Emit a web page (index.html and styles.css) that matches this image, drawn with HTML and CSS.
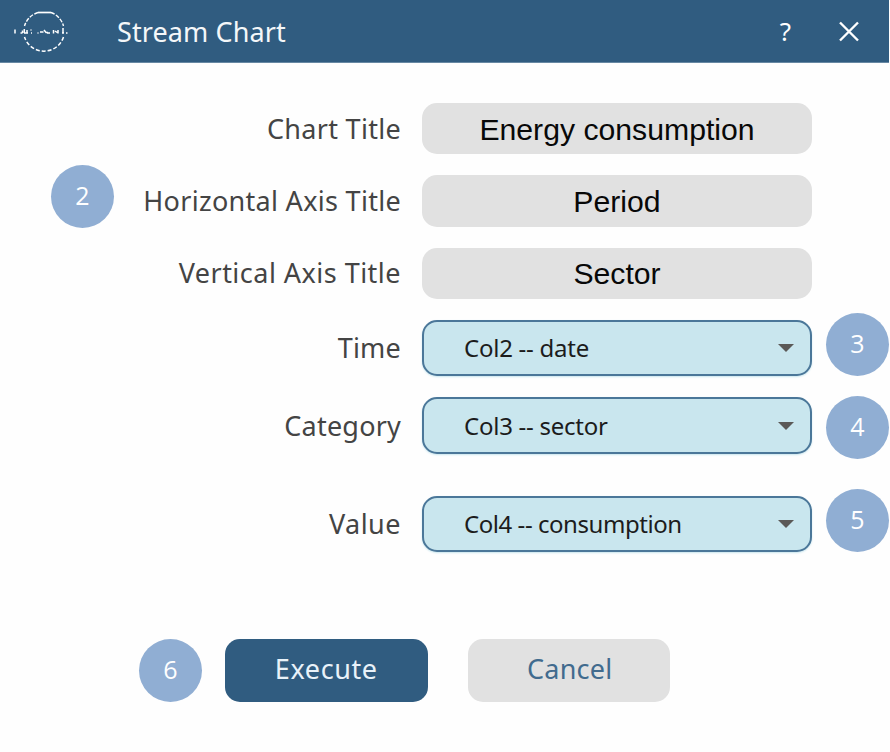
FILE: index.html
```html
<!DOCTYPE html>
<html lang="en">
<head>
    <meta charset="UTF-8">
    <meta name="viewport" content="width=device-width, initial-scale=1.0">
    <title>Stream Chart</title>
    <link rel="stylesheet" href="styles.css">
</head>
<body>
    <div class="dialog">
        <header class="titlebar">
            <svg class="logo" width="58" height="46" viewBox="0 0 58 46" fill="none" stroke="#fff">
                <path d="M25 3.5h13" stroke-width="1.7"/>
                <path d="M38 3.5A20 20 0 0 1 50.5 17M25 3.5A20 20 0 0 0 11.5 17" stroke-width="1.4" stroke-dasharray="4 1.5"/>
                <path d="M50.5 28A20.5 20.5 0 0 1 11.5 28" stroke-width="1.5" stroke-dasharray="4 2"/>
                <path d="M2 20.5v4M7.5 24h2M9.5 21.5v2.5M11 24h4M11.3 20v4M14 21v3M18 20.5v1M18 24h1M24.5 24h1M27 23h3.5M31 21l2 2.5h2M34 24h3M40.5 21v3.5M42 22l3 2M45 21v3.5M50 19v5M49 24h2M53 24h1.5" stroke-width="1.5"/>
            </svg>
            <h1 class="title">Stream Chart</h1>
            <button type="button" class="icon-btn help-btn" aria-label="Help">?</button>
            <button type="button" class="icon-btn close-btn" aria-label="Close">
                <svg width="22" height="22" viewBox="0 0 22 22" fill="none" stroke="#fff" stroke-width="2.4">
                    <path d="M2 2.5l18 18M20 2.5l-18 18"/>
                </svg>
            </button>
        </header>

        <form class="form">
            <div class="form-row">
                <label class="label-chart" for="chartTitle">Chart Title</label>
                <input type="text" id="chartTitle" value="Energy consumption">
            </div>
            <div class="form-row">
                <span class="step step-2">2</span>
                <label class="label-horizontal" for="xTitle">Horizontal Axis Title</label>
                <input type="text" id="xTitle" value="Period">
            </div>
            <div class="form-row">
                <label class="label-vertical" for="yTitle">Vertical Axis Title</label>
                <input type="text" id="yTitle" value="Sector">
            </div>
            <div class="form-row">
                <label class="label-time">Time</label>
                <div class="select"><span class="value-time">Col2 -- date</span></div>
                <span class="step step-3">3</span>
            </div>
            <div class="form-row">
                <label class="label-category">Category</label>
                <div class="select"><span class="value-category">Col3 -- sector</span></div>
                <span class="step step-4">4</span>
            </div>
            <div class="form-row row-value">
                <label class="label-value">Value</label>
                <div class="select"><span class="value-value">Col4 -- consumption</span></div>
                <span class="step step-5">5</span>
            </div>

            <div class="actions">
                <span class="step step-6">6</span>
                <button type="button" class="btn execute-btn">Execute</button>
                <button type="button" class="btn cancel-btn">Cancel</button>
            </div>
        </form>
    </div>
</body>
</html>
```
FILE: styles.css
```css
* {
    margin: 0;
    padding: 0;
    box-sizing: border-box;
}

body {
    font-family: 'Noto Sans', 'Open Sans', sans-serif;
    background: #fefefe;
    overflow: hidden;
}

.dialog {
    width: 889px;
    height: 752px;
}

.titlebar {
    display: flex;
    align-items: center;
    height: 63px;
    padding: 0 29px 0 13px;
    background: #305c80;
    border-bottom: 1px solid #6788a3;
    color: #f4f7f9;
}

.logo {
    margin-top: 2px;
}

.title {
    flex: 1;
    margin-left: 46px;
    padding-top: 2px;
    font-size: 27px;
    font-weight: 400;
    line-height: 36px;
    letter-spacing: 0.1px;
}

.icon-btn {
    display: flex;
    border: none;
    background: none;
    color: #fff;
    font-family: inherit;
}

.help-btn {
    margin-right: 47px;
    font-size: 26px;
}

.form {
    padding-top: 40px;
}

.form-row {
    position: relative;
    display: grid;
    grid-template-columns: 401px 390px;
    column-gap: 21px;
    align-items: center;
    margin-bottom: 21px;
}

.row-value {
    margin-top: 42px;
}

label {
    color: #444;
    font-size: 27px;
    line-height: 36px;
    text-align: right;
    white-space: nowrap;
}

.label-chart,
.label-horizontal {
    letter-spacing: 0.3px;
}

.label-vertical,
.label-value {
    letter-spacing: 0.48px;
}

.label-time,
.label-category {
    letter-spacing: 0.2px;
}

input {
    width: 390px;
    height: 51.4px;
    padding-top: 2px;
    border: none;
    border-radius: 15px;
    background: #e1e1e1;
    color: #080808;
    font-family: 'Liberation Sans', Arial, sans-serif;
    font-size: 30.2px;
    text-align: center;
}

.select {
    display: flex;
    align-items: center;
    justify-content: space-between;
    height: 56.3px;
    padding: 0 16px 0 40px;
    border: 2px solid #4b7799;
    border-radius: 15px;
    background: #c9e6ee;
    box-shadow: 0 1px 2px #c9e6ee;
    color: #1c1c1c;
    font-size: 24px;
    letter-spacing: -0.25px;
    white-space: nowrap;
}

.select span {
    padding-bottom: 1px;
}

.value-value {
    letter-spacing: -0.45px;
}

.select::after {
    content: '';
    border: 8px solid transparent;
    border-top-color: #5b5957;
    border-bottom: none;
}

.step {
    position: absolute;
    width: 63px;
    height: 63px;
    border-radius: 50%;
    background: #90aed3;
    color: #fff;
    font-family: 'Open Sans', sans-serif;
    font-size: 25px;
    line-height: 61px;
    text-align: center;
}

.step-2 {
    left: 51px;
    top: -10px;
}

.step-3 {
    left: 826px;
    top: -7px;
}

.step-4 {
    left: 826px;
    top: -1px;
}

.step-5 {
    left: 826px;
    top: -7px;
}

.step-6 {
    left: 139px;
    top: 0;
}

.actions {
    position: relative;
    display: flex;
    gap: 40px;
    margin-top: 87px;
    padding-left: 225px;
}

.btn {
    width: 202.5px;
    height: 63px;
    padding-bottom: 4px;
    border: none;
    border-radius: 15px;
    font-family: inherit;
    font-size: 27px;
}

.execute-btn {
    background: #305c80;
    color: #e9f2f9;
    letter-spacing: 0.6px;
}

.cancel-btn {
    padding-left: 2px;
    background: #e1e1e1;
    color: #416b8e;
    letter-spacing: 0.2px;
}
```
